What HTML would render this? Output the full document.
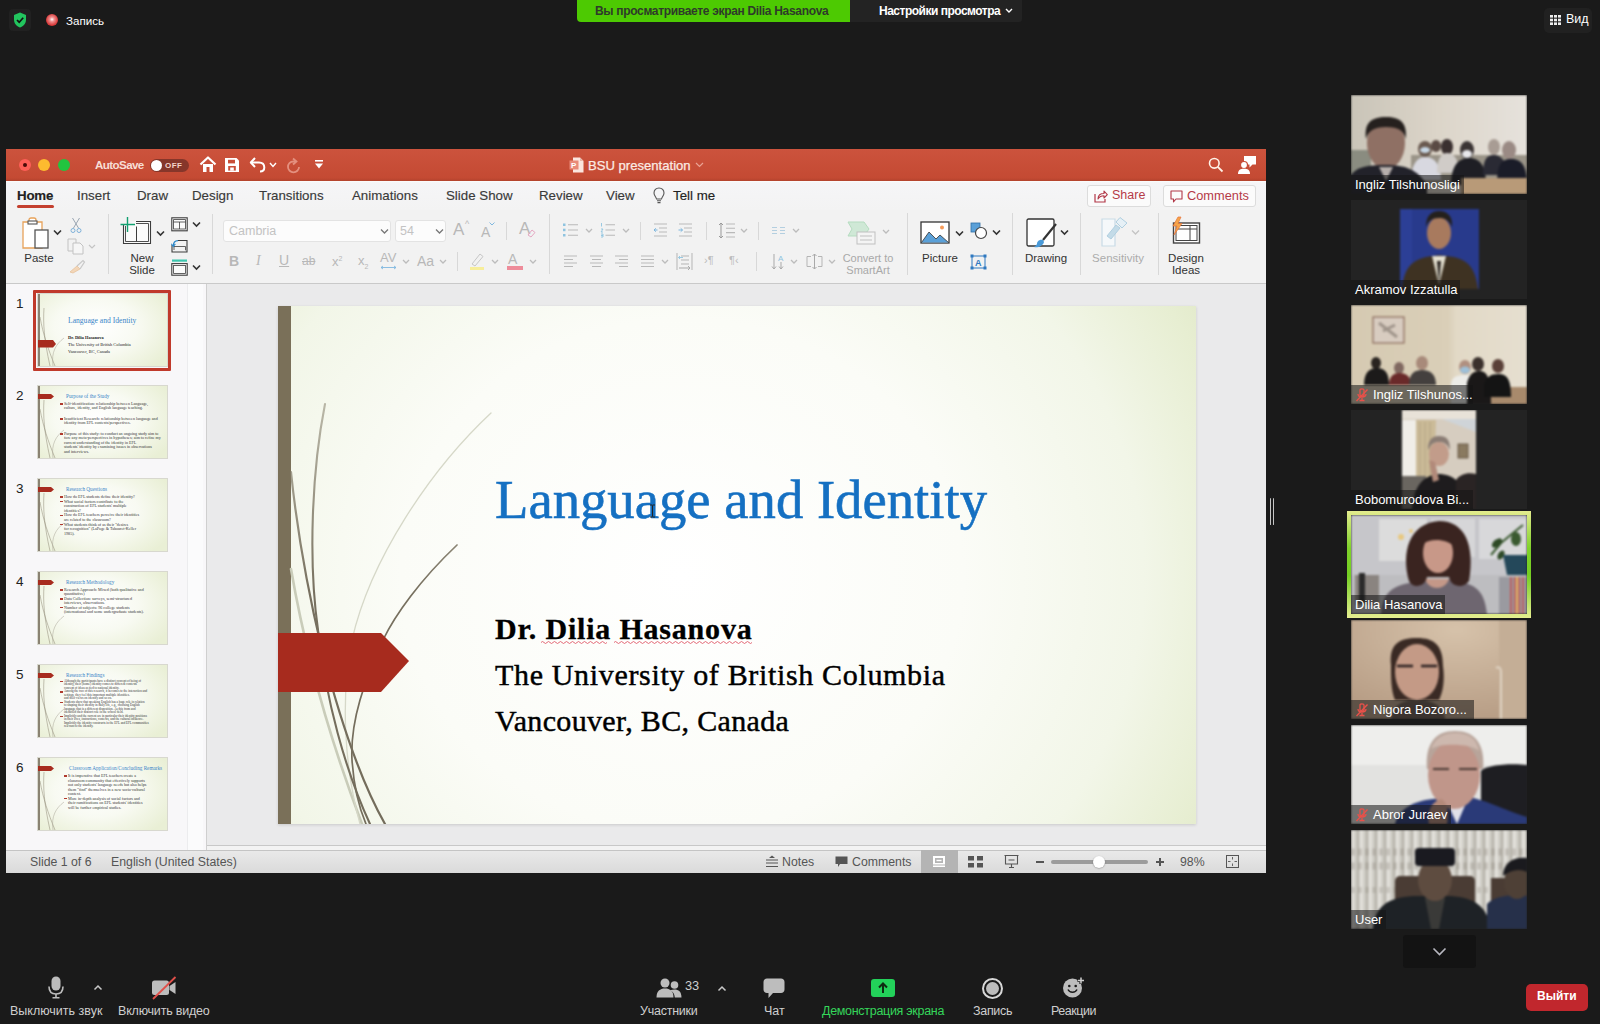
<!DOCTYPE html>
<html><head><meta charset="utf-8">
<style>
*{margin:0;padding:0;box-sizing:border-box}
html,body{width:1600px;height:1024px;overflow:hidden;background:#1a1a1a;font-family:"Liberation Sans",sans-serif}
.a{position:absolute}
.w{color:#fff}
/* top zoom bar */
#banner{left:577px;top:0;width:273px;height:22px;background:#4dca02;border-radius:0 0 0 4px}
#banner span{position:absolute;white-space:nowrap;left:18px;top:4px;font-size:12px;font-weight:bold;color:#2e3a2a;letter-spacing:-0.32px}
#settings{left:850px;top:0;width:172px;height:22px;background:#232323;border-radius:0 0 3px 0}
#settings span{position:absolute;white-space:nowrap;left:29px;top:4px;font-size:12px;font-weight:bold;color:#fff;letter-spacing:-0.5px}
/* ppt window */
#win{left:6px;top:149px;width:1260px;height:724px;background:#f3f3f3;overflow:hidden}
#title{left:0;top:0;width:1260px;height:32px;background:linear-gradient(#cc533d,#c44a33 90%,#b3432d)}
#tabs{left:0;top:32px;width:1260px;height:29px;background:linear-gradient(#fdfdfd,#f5f5f7 6%,#f3f3f3)}
#tools{left:0;top:61px;width:1260px;height:74px;background:#f2f2f2;border-bottom:1px solid #c9c9c9}
#panel{left:0;top:135px;width:201px;height:566px;background:#f8f7f9;border-right:1px solid #cfcfcf}
#stage{left:201px;top:135px;width:1059px;height:562px;background:#eaeaeb;border-bottom:1px solid #c8c8c8}
#status{left:0;top:701px;width:1260px;height:23px;background:linear-gradient(#e9e9e9,#dadada);border-top:1px solid #c4c4c4}
.tabt{position:absolute;top:188px;font-size:13.3px;color:#3a3a3a;white-space:nowrap;-webkit-text-stroke:0.15px currentColor}
.rl{position:absolute;font-size:11px;color:#333;text-align:center;line-height:12px}
.dis{color:#a8a8a8}
.sep{position:absolute;width:1px;background:#d8d8d8}
/* slide */
#slide{left:272px;top:157px;width:918px;height:518px;background:radial-gradient(ellipse 68% 110% at 44% 52%,#ffffff 0%,#fbfcf7 45%,#f2f6e8 74%,#e7eed2 91%,#e0e8c6 100%);box-shadow:0 1px 3px rgba(0,0,0,.14)}
.th{position:absolute;left:38px;width:129px;height:72px;background:radial-gradient(ellipse 65% 75% at 45% 45%,#ffffff 0%,#f8faf2 50%,#e9efd5 100%);box-shadow:0 0 0 1px #d8d8cf;overflow:hidden}
.tt{white-space:nowrap;font-family:"Liberation Serif",serif}
/* participants */
.tile{position:absolute;left:1351px;width:176px;height:99px;background:#232323;overflow:hidden}
.tile svg{filter:blur(1.1px)}
.tile svg.a:not([width="79"]):not([width="74"]){filter:none}
.nm{position:absolute;left:0;bottom:0;height:19px;background:rgba(20,20,20,.55);color:#fff;font-size:13px;line-height:19px;padding:0 4px;white-space:nowrap}
/* bottom bar */
.bl{position:absolute;top:1004px;font-size:12.5px;color:#cfcfcf;white-space:nowrap}
</style></head><body>

<!-- top left -->
<div class="a" style="left:9px;top:9px;width:22px;height:22px;background:#212121;border-radius:4px"></div>
<svg class="a" style="left:13px;top:12px" width="14" height="16" viewBox="0 0 14 16"><path d="M7 0.5 L13 3 V7.5 C13 11.5 10.5 14.3 7 15.5 C3.5 14.3 1 11.5 1 7.5 V3 Z" fill="#22c55e"/><path d="M4 8 L6.2 10.2 L10.2 5.8" stroke="#111" stroke-width="1.7" fill="none"/></svg>
<div class="a" style="left:46px;top:14px;width:12px;height:12px;border-radius:50%;background:radial-gradient(circle at 50% 45%,#fff 0%,#f09090 25%,#d83a3a 65%,#a82020 100%)"></div>
<div class="a w" style="left:66px;top:14px;font-size:11.6px">Запись</div>

<div id="banner" class="a"><span>Вы просматриваете экран Dilia Hasanova</span></div>
<div id="settings" class="a"><span>Настройки просмотра</span></div>
<svg class="a" style="left:1005px;top:8px" width="8" height="6" viewBox="0 0 8 6"><path d="M1 1 L4 4 L7 1" stroke="#fff" stroke-width="1.4" fill="none"/></svg>

<div class="a" style="left:1544px;top:8px;width:48px;height:25px;background:#212121;border-radius:5px"></div>
<svg class="a" style="left:1550px;top:15px" width="11" height="10" viewBox="0 0 11 10"><g fill="#eee"><rect x="0" y="0" width="3" height="2.6"/><rect x="4" y="0" width="3" height="2.6"/><rect x="8" y="0" width="3" height="2.6"/><rect x="0" y="3.7" width="3" height="2.6"/><rect x="4" y="3.7" width="3" height="2.6"/><rect x="8" y="3.7" width="3" height="2.6"/><rect x="0" y="7.4" width="3" height="2.6"/><rect x="4" y="7.4" width="3" height="2.6"/><rect x="8" y="7.4" width="3" height="2.6"/></g></svg>
<div class="a w" style="left:1566px;top:12px;font-size:12.5px">Вид</div>

<!-- PowerPoint window -->
<div id="win" class="a">
  <div id="title" class="a"></div>
  <div id="tabs" class="a"></div>
  <div id="tools" class="a"></div>
  <div id="panel" class="a"></div>
  <div class="a" style="left:181px;top:135px;width:16px;height:566px;background:#fbfbfc;border-left:1px solid #ececee"></div>
  <div id="stage" class="a"></div>
  <div id="status" class="a"></div>
  <div id="slide" class="a">
    <div class="a" style="left:0;top:0;width:13px;height:518px;background:#7a7059"></div>
    <svg class="a" style="left:0;top:0" width="918" height="518" viewBox="278 306 918 518">
      <defs><linearGradient id="gd" gradientUnits="userSpaceOnUse" x1="0" y1="400" x2="0" y2="824"><stop offset="0" stop-color="#8a8470" stop-opacity="0.55"/><stop offset="0.45" stop-color="#77705f"/><stop offset="1" stop-color="#736c5b"/></linearGradient></defs>
      <g fill="none" stroke-linecap="round">
        <path d="M291 569 C305 650 330 740 362 824" stroke="#c9ccb9" stroke-width="2.6"/>
        <path d="M491 413 C430 470 370 560 352 640 C340 700 345 770 360 824" stroke="#d6d8c8" stroke-width="1.3"/>
        <path d="M325 404 C312 470 308 560 318 630 C326 700 345 770 370 824" stroke="url(#gd)" stroke-width="2.1"/>
        <path d="M291 472 C298 540 310 600 322 650 C340 720 360 780 385 824" stroke="url(#gd)" stroke-width="2.2"/>
        <path d="M457 545 C420 580 395 615 383 640 C365 680 350 720 352 760 C354 790 360 810 366 824" stroke="url(#gd)" stroke-width="1.7"/>
      </g>
      <path d="M278 633 H381 L409 661 L381 692 H278 Z" fill="#a72b1e"/>
    </svg>
    <div class="a" id="t1" style="left:217px;top:159px;font-family:'Liberation Serif',serif;font-size:54.7px;color:#1570c2;-webkit-text-stroke:0.6px #1570c2;white-space:nowrap;line-height:70px">Language and Identity</div>
    <div class="a" id="t2" style="left:217px;top:303px;font-family:'Liberation Serif',serif;font-size:30px;font-weight:bold;color:#000;-webkit-text-stroke:0.3px #000;white-space:nowrap;letter-spacing:0.8px;line-height:40px">Dr. Dilia Hasanova</div>
    <div class="a" id="t3" style="left:217px;top:349px;font-family:'Liberation Serif',serif;font-size:30px;letter-spacing:0.66px;color:#000;-webkit-text-stroke:0.45px #000;white-space:nowrap;line-height:40px">The University of British Columbia</div>
    <div class="a" id="t4" style="left:217px;top:395px;font-family:'Liberation Serif',serif;font-size:30px;letter-spacing:0.34px;color:#000;-webkit-text-stroke:0.45px #000;white-space:nowrap;line-height:40px">Vancouver, BC, Canada</div>
    <svg class="a" style="left:263px;top:334px" width="212" height="5" viewBox="0 0 212 5"><path d="M0 2.5 q1.5 -2 3 0 t3 0 t3 0 t3 0 t3 0 t3 0 t3 0 t3 0 t3 0 t3 0 t3 0 t3 0 t3 0 t3 0 t3 0 t3 0 t3 0 t3 0 t3 0 t3 0 t3 0 t3 0" stroke="#e05a6a" stroke-width="0.9" fill="none"/><path d="M73 2.5 q1.5 -2 3 0 t3 0 t3 0 t3 0 t3 0 t3 0 t3 0 t3 0 t3 0 t3 0 t3 0 t3 0 t3 0 t3 0 t3 0 t3 0 t3 0 t3 0 t3 0 t3 0 t3 0 t3 0 t3 0 t3 0 t3 0 t3 0 t3 0 t3 0 t3 0 t3 0 t3 0 t3 0 t3 0 t3 0 t3 0 t3 0 t3 0 t3 0 t3 0 t3 0 t3 0 t3 0 t3 0 t3 0 t3 0 t3 0" stroke="#e05a6a" stroke-width="0.9" fill="none"/></svg>
    <svg class="a" style="left:371px;top:198px" width="7" height="14" viewBox="0 0 7 14"><path d="M1 1 H3 Q3.5 1.5 4 1 H6 M3.5 1.5 V12.5 M1 13 H3 Q3.5 12.5 4 13 H6" stroke="#222" stroke-width="1" fill="none"/></svg>
  </div>
</div>


<!-- RIBBON (page coords) -->
<div id="rib">
<!-- traffic lights -->
<div class="a" style="left:19px;top:159px;width:12px;height:12px;border-radius:50%;background:#fd5f57"></div>
<div class="a" style="left:23px;top:163px;width:4px;height:4px;border-radius:50%;background:#4a0b08"></div>
<div class="a" style="left:38px;top:159px;width:12px;height:12px;border-radius:50%;background:#fdbb2f"></div>
<div class="a" style="left:58px;top:159px;width:12px;height:12px;border-radius:50%;background:#22c43f"></div>
<div class="a" style="left:95px;top:158px;font-size:11.6px;color:#f7ddd5;font-weight:bold;letter-spacing:-0.6px">AutoSave</div>
<div class="a" style="left:150px;top:159px;width:39px;height:13px;border-radius:7px;background:#86362a"></div>
<div class="a" style="left:151px;top:160px;width:11px;height:11px;border-radius:50%;background:#fff"></div>
<div class="a" style="left:165px;top:161px;font-size:8px;color:#f3d3ca;font-weight:bold;letter-spacing:0.5px">OFF</div>
<svg class="a" style="left:199px;top:156px" width="18" height="17" viewBox="0 0 18 17"><path d="M1.5 8.5 L9 1.5 L16.5 8.5" stroke="#fff" stroke-width="2.2" fill="none" stroke-linejoin="round"/><path d="M4 8 V16 H7.5 V11 H10.5 V16 H14 V8" stroke="none" fill="#fff"/></svg>
<svg class="a" style="left:224px;top:157px" width="16" height="16" viewBox="0 0 16 16"><path d="M1 1 H12.5 L15 3.5 V15 H1 Z" fill="#fff"/><rect x="4" y="2.8" width="7" height="3.6" fill="#c84e38"/><rect x="4.2" y="9" width="7.6" height="4.6" fill="#c84e38"/><rect x="6.2" y="10.5" width="3.6" height="3.2" fill="#fff"/></svg>
<svg class="a" style="left:249px;top:156px" width="17" height="17" viewBox="0 0 17 17"><path d="M6 2 L1.8 6.5 L6 11" stroke="#fff" stroke-width="2" fill="none" stroke-linejoin="round"/><path d="M2 6.5 H10 C13.5 6.5 15.3 8.8 15.3 11.5 C15.3 14 13.5 15.5 11 15.5" stroke="#fff" stroke-width="2" fill="none"/></svg>
<svg class="a" style="left:269px;top:162px" width="8" height="6" viewBox="0 0 8 6"><path d="M1 1 L4 4.5 L7 1" stroke="#fff" stroke-width="1.4" fill="none"/></svg>
<svg class="a" style="left:285px;top:156px" width="17" height="18" viewBox="0 0 17 18"><path d="M8 2.5 L11.5 5.5 L8 8.5" stroke="#e4907f" stroke-width="1.8" fill="none"/><path d="M11 5.5 H8.5 C5 5.5 3 8 3 11 C3 14 5.5 16.3 8.5 16.3 C11.5 16.3 14 14 14 11" stroke="#e4907f" stroke-width="1.8" fill="none"/></svg>
<svg class="a" style="left:314px;top:159px" width="10" height="11" viewBox="0 0 10 11"><rect x="1" y="1" width="8" height="1.6" fill="#fff"/><path d="M1 4.5 H9 L5 9.5 Z" fill="#fff"/></svg>
<svg class="a" style="left:569px;top:157px" width="15" height="16" viewBox="0 0 15 16"><path d="M4 0.5 H11 L14.5 4 V15.5 H4 Z" fill="#fbe6df"/><path d="M11 0.5 V4 H14.5" fill="#e8b7aa"/><rect x="0.5" y="3.5" width="9" height="9" fill="#e98a78"/><text x="2" y="11" font-size="8" font-family="Liberation Sans" font-weight="bold" fill="#fff">P</text></svg>
<div class="a" style="left:588px;top:158px;font-size:13.1px;color:#fbeae3;white-space:nowrap;-webkit-text-stroke:0.25px #fbeae3">BSU presentation</div>
<svg class="a" style="left:695px;top:162px" width="9" height="6" viewBox="0 0 9 6"><path d="M1 1 L4.5 4.5 L8 1" stroke="#eaa394" stroke-width="1.2" fill="none"/></svg>
<svg class="a" style="left:1208px;top:157px" width="16" height="16" viewBox="0 0 16 16"><circle cx="6.3" cy="6.3" r="4.8" stroke="#fff3e8" stroke-width="1.6" fill="none"/><path d="M9.8 9.8 L14.5 14.5" stroke="#fff3e8" stroke-width="1.8"/></svg>
<svg class="a" style="left:1237px;top:155px" width="20" height="20" viewBox="0 0 20 20"><path d="M7 1 H19 V9.5 H15.5 L12.5 12.5 V9.5 H7 Z" fill="#fff"/><circle cx="7" cy="10" r="3.5" fill="#fff" stroke="#c84e38" stroke-width="1.2"/><path d="M1 19 C1 15 3.5 13.8 7 13.8 C10.5 13.8 13 15 13 19 Z" fill="#fff"/></svg>

<!-- tabs -->
<div class="tabt" style="left:17px;color:#222;font-weight:bold;letter-spacing:-0.2px">Home</div>
<div class="a" style="left:17px;top:205px;width:37px;height:3px;border-radius:2px;background:#c4402f"></div>
<div class="tabt" style="left:77px">Insert</div>
<div class="tabt" style="left:137px">Draw</div>
<div class="tabt" style="left:192px">Design</div>
<div class="tabt" style="left:259px">Transitions</div>
<div class="tabt" style="left:352px">Animations</div>
<div class="tabt" style="left:446px">Slide Show</div>
<div class="tabt" style="left:539px">Review</div>
<div class="tabt" style="left:606px">View</div>
<svg class="a" style="left:653px;top:187px" width="12" height="17" viewBox="0 0 12 17"><path d="M6 1 C3 1 1 3.2 1 6 C1 8.5 3 9.8 3.5 12 H8.5 C9 9.8 11 8.5 11 6 C11 3.2 9 1 6 1 Z" stroke="#555" stroke-width="1.1" fill="none"/><path d="M4 13.8 H8 M4.5 15.6 H7.5" stroke="#555" stroke-width="1.1"/></svg>
<div class="tabt" style="left:673px;color:#222">Tell me</div>
<div class="a" style="left:1087px;top:185px;width:64px;height:22px;background:#fbfbfb;border:1px solid #dcdcdc;border-radius:3px"></div>
<svg class="a" style="left:1094px;top:189px" width="14" height="14" viewBox="0 0 14 14"><path d="M1 5 V13 H11 V10" stroke="#b23848" stroke-width="1.2" fill="none"/><path d="M4 10 C4 6 6.5 4.5 10 4.5 V2 L13.3 5.6 L10 9 V6.8 C7 6.8 5.3 7.8 4 10 Z" stroke="#b23848" stroke-width="1.1" fill="none" stroke-linejoin="round"/></svg>
<div class="a" style="left:1112px;top:188px;font-size:12.5px;color:#b53a47">Share</div>
<div class="a" style="left:1163px;top:185px;width:93px;height:22px;background:#fbfbfb;border:1px solid #dcdcdc;border-radius:3px"></div>
<svg class="a" style="left:1170px;top:190px" width="13" height="13" viewBox="0 0 13 13"><path d="M1 1 H12 V9 H6 L3.5 11.8 V9 H1 Z" stroke="#b23848" stroke-width="1.1" fill="none" stroke-linejoin="round"/></svg>
<div class="a" style="left:1187px;top:188px;font-size:12.8px;color:#b53a47">Comments</div>

<!-- tools -->
<svg class="a" style="left:21px;top:217px" width="30" height="33" viewBox="0 0 30 33"><path d="M2 5 H8 V3 C8 1.5 9 1 10 1 H13 C14 1 15 1.5 15 3 V5 H21 V31 H2 Z" fill="#fff" stroke="#e7a25a" stroke-width="1.3"/><rect x="7" y="4" width="9" height="3" fill="#fff" stroke="#555" stroke-width="1.1"/><rect x="14" y="13" width="13" height="18" fill="#fff" stroke="#555" stroke-width="1.3"/></svg>
<svg class="a" style="left:53px;top:229px" width="9" height="7" viewBox="0 0 9 7"><path d="M1 1.5 L4.5 5 L8 1.5" stroke="#333" stroke-width="1.6" fill="none"/></svg>
<div class="rl" style="left:22px;top:252px;width:34px;font-size:11.5px">Paste</div>
<svg class="a" style="left:70px;top:217px" width="12" height="17" viewBox="0 0 12 17"><path d="M2.5 1 L8.5 11 M9.5 1 L3.5 11" stroke="#9aa6b2" stroke-width="1"/><circle cx="3" cy="13.5" r="2" stroke="#7fb1d9" stroke-width="1" fill="none"/><circle cx="9" cy="13.5" r="2" stroke="#7fb1d9" stroke-width="1" fill="none"/></svg>
<svg class="a" style="left:67px;top:238px" width="19" height="17" viewBox="0 0 19 17"><path d="M1 1 H9 V13 H1 Z" fill="none" stroke="#c2c2c2" stroke-width="1"/><path d="M6 5 H13 L16 8 V16 H6 Z" fill="#f6f6f6" stroke="#c2c2c2" stroke-width="1"/></svg>
<svg class="a" style="left:88px;top:244px" width="8" height="6" viewBox="0 0 8 6"><path d="M1 1 L4 4 L7 1" stroke="#c4c4c4" stroke-width="1.2" fill="none"/></svg>
<svg class="a" style="left:68px;top:259px" width="18" height="15" viewBox="0 0 18 15"><path d="M2 13 L9 7 L12 10 L5 14 Z" fill="#f3d6b8" stroke="#e6c19c" stroke-width="0.8"/><path d="M9 7 L15 1.5 L16.5 3 L12 10" stroke="#c8c8c8" stroke-width="1.2" fill="none"/></svg>
<div class="sep" style="left:108px;top:214px;height:60px"></div>
<svg class="a" style="left:120px;top:216px" width="33" height="30" viewBox="0 0 33 30"><path d="M3.5 8.5 V27.5 H30.5 V5.5 H16" fill="#fbfbfb" stroke="#3c3c3c" stroke-width="1.1"/><path d="M5.5 10 V25.5 H28.5 V7.5 H16" fill="none" stroke="#3c3c3c" stroke-width="0.9"/><path d="M16.5 10.5 V25.5" stroke="#3c3c3c" stroke-width="1"/><path d="M7.5 1 V16 M0.5 8.5 H15" stroke="#12a070" stroke-width="1.4"/></svg>
<svg class="a" style="left:156px;top:230px" width="9" height="7" viewBox="0 0 9 7"><path d="M1 1.5 L4.5 5 L8 1.5" stroke="#333" stroke-width="1.6" fill="none"/></svg>
<div class="rl" style="left:124px;top:252px;width:36px;font-size:11.5px;line-height:12px">New<br>Slide</div>
<svg class="a" style="left:171px;top:217px" width="17" height="15" viewBox="0 0 17 15"><rect x="0.8" y="0.8" width="15.4" height="13" fill="#fbfbfb" stroke="#3c3c3c" stroke-width="1.1"/><rect x="2.6" y="2.6" width="11.8" height="9.4" fill="none" stroke="#3c3c3c" stroke-width="0.8"/><path d="M2.6 5 H14.4 M8.5 5 V12" stroke="#3c3c3c" stroke-width="0.8"/></svg>
<svg class="a" style="left:192px;top:221px" width="9" height="7" viewBox="0 0 9 7"><path d="M1 1.5 L4.5 5 L8 1.5" stroke="#333" stroke-width="1.6" fill="none"/></svg>
<svg class="a" style="left:171px;top:238px" width="17" height="15" viewBox="0 0 17 15"><path d="M7 2.5 H16 V14 H1 V7" fill="none" stroke="#3c3c3c" stroke-width="1.1"/><path d="M3 12 V8.5 H14.5 V12.3" fill="none" stroke="#3c3c3c" stroke-width="0.8"/><path d="M2.3 8 C2.3 4.5 3.8 2.6 7 2.6" stroke="#2a86c8" stroke-width="1.2" fill="none"/><path d="M0.3 5.8 L2.3 8.5 L4.3 5.8" stroke="#2a86c8" stroke-width="1.1" fill="none"/></svg>
<svg class="a" style="left:171px;top:259px" width="17" height="17" viewBox="0 0 17 17"><rect x="1" y="0.5" width="15" height="2.2" fill="#3cc6ae"/><rect x="0.8" y="4.6" width="15.4" height="11.6" fill="#fbfbfb" stroke="#3c3c3c" stroke-width="1.1"/><rect x="2.6" y="6.4" width="11.8" height="8" fill="none" stroke="#3c3c3c" stroke-width="0.8"/></svg>
<svg class="a" style="left:192px;top:264px" width="9" height="7" viewBox="0 0 9 7"><path d="M1 1.5 L4.5 5 L8 1.5" stroke="#333" stroke-width="1.6" fill="none"/></svg>
<div class="sep" style="left:212px;top:214px;height:60px"></div>
<!-- font box -->
<div class="a" style="left:223px;top:220px;width:168px;height:22px;background:#fcfcfc;border:1px solid #e3e3e3;border-radius:3px"></div>
<div class="a" style="left:229px;top:224px;font-size:12.5px;color:#c3c3c3">Cambria</div>
<svg class="a" style="left:380px;top:228px" width="9" height="7" viewBox="0 0 9 7"><path d="M1 1.5 L4.5 5 L8 1.5" stroke="#777" stroke-width="1.3" fill="none"/></svg>
<div class="a" style="left:395px;top:220px;width:51px;height:22px;background:#fcfcfc;border:1px solid #e3e3e3;border-radius:3px"></div>
<div class="a" style="left:400px;top:224px;font-size:12.5px;color:#c3c3c3">54</div>
<svg class="a" style="left:435px;top:228px" width="9" height="7" viewBox="0 0 9 7"><path d="M1 1.5 L4.5 5 L8 1.5" stroke="#777" stroke-width="1.3" fill="none"/></svg>
<div class="a dis" style="left:453px;top:220px;font-size:17px;color:#b8b8b8">A</div>
<div class="a" style="left:465px;top:219px;font-size:9px;color:#b8b8b8">^</div>
<div class="a dis" style="left:481px;top:224px;font-size:14px;color:#b8b8b8">A</div>
<svg class="a" style="left:489px;top:222px" width="6" height="4" viewBox="0 0 6 4"><path d="M0.5 0.5 L3 3 L5.5 0.5" stroke="#80b8e0" stroke-width="1" fill="none"/></svg>
<div class="sep" style="left:506px;top:222px;height:18px"></div>
<div class="a" style="left:519px;top:219px;font-size:17px;color:#b8b8b8">A</div>
<svg class="a" style="left:526px;top:228px" width="10" height="10" viewBox="0 0 10 10"><path d="M2 7 L6 2 L9 4.5 L5 9 Z" fill="none" stroke="#e5a7c2" stroke-width="1"/></svg>
<div class="sep" style="left:549px;top:214px;height:60px"></div>
<!-- row 2 font -->
<div class="a" style="left:229px;top:253px;font-size:14px;font-weight:bold;color:#b8b8b8">B</div>
<div class="a" style="left:256px;top:253px;font-size:14px;font-style:italic;color:#b8b8b8;font-family:'Liberation Serif',serif">I</div>
<div class="a" style="left:279px;top:252px;font-size:14px;color:#b8b8b8;text-decoration:underline">U</div>
<div class="a" style="left:302px;top:254px;font-size:12px;color:#b8b8b8;text-decoration:line-through">ab</div>
<div class="a" style="left:332px;top:254px;font-size:13px;color:#b8b8b8">x<sup style="font-size:7px">2</sup></div>
<div class="a" style="left:358px;top:253px;font-size:13px;color:#b8b8b8">x<sub style="font-size:7px">2</sub></div>
<div class="a" style="left:380px;top:250px;font-size:13px;color:#b8b8b8">AV</div>
<svg class="a" style="left:380px;top:265px" width="17" height="5" viewBox="0 0 17 5"><path d="M1 2.5 H16 M1 2.5 L3 1 M1 2.5 L3 4 M16 2.5 L14 1 M16 2.5 L14 4" stroke="#80b8e0" stroke-width="0.9" fill="none"/></svg>
<svg class="a" style="left:402px;top:259px" width="8" height="6" viewBox="0 0 8 6"><path d="M1 1 L4 4 L7 1" stroke="#bcbcbc" stroke-width="1.3" fill="none"/></svg>
<div class="a" style="left:417px;top:253px;font-size:14px;color:#b8b8b8">Aa</div>
<svg class="a" style="left:439px;top:259px" width="8" height="6" viewBox="0 0 8 6"><path d="M1 1 L4 4 L7 1" stroke="#bcbcbc" stroke-width="1.3" fill="none"/></svg>
<div class="sep" style="left:457px;top:252px;height:19px"></div>
<svg class="a" style="left:469px;top:252px" width="16" height="18" viewBox="0 0 16 18"><path d="M3 12 L11 2 L14 4.5 L6 14 Z" fill="none" stroke="#c6c6c6" stroke-width="1"/><rect x="1" y="15" width="14" height="3" fill="#f7ee9a"/></svg>
<svg class="a" style="left:491px;top:259px" width="8" height="6" viewBox="0 0 8 6"><path d="M1 1 L4 4 L7 1" stroke="#bcbcbc" stroke-width="1.3" fill="none"/></svg>
<div class="a" style="left:508px;top:251px;font-size:14px;color:#b8b8b8">A</div>
<div class="a" style="left:507px;top:266px;width:16px;height:4px;background:#ee8c9a"></div>
<svg class="a" style="left:529px;top:259px" width="8" height="6" viewBox="0 0 8 6"><path d="M1 1 L4 4 L7 1" stroke="#bcbcbc" stroke-width="1.3" fill="none"/></svg>
<!-- paragraph -->
<svg class="a" style="left:562px;top:222px" width="17" height="16" viewBox="0 0 17 16"><rect x="1" y="1.5" width="2.5" height="2.5" fill="#8fc4e0"/><rect x="1" y="6.7" width="2.5" height="2.5" fill="#8fc4e0"/><rect x="1" y="12" width="2.5" height="2.5" fill="#8fc4e0"/><path d="M6 2.7 H16 M6 8 H16 M6 13.2 H16" stroke="#b9b9b9" stroke-width="1.1"/></svg>
<svg class="a" style="left:585px;top:228px" width="8" height="6" viewBox="0 0 8 6"><path d="M1 1 L4 4 L7 1" stroke="#bcbcbc" stroke-width="1.3" fill="none"/></svg>
<svg class="a" style="left:600px;top:222px" width="16" height="16" viewBox="0 0 16 16"><path d="M1.5 1 V4.5 M1 7 H3 L1 10 H3 M1 12 H3 V15 H1 M1 13.5 H3" stroke="#8fc4e0" stroke-width="0.9" fill="none"/><path d="M5.5 2.7 H15 M5.5 8 H15 M5.5 13.2 H15" stroke="#b9b9b9" stroke-width="1.1"/></svg>
<svg class="a" style="left:622px;top:228px" width="8" height="6" viewBox="0 0 8 6"><path d="M1 1 L4 4 L7 1" stroke="#bcbcbc" stroke-width="1.3" fill="none"/></svg>
<div class="sep" style="left:640px;top:222px;height:18px"></div>
<svg class="a" style="left:653px;top:223px" width="15" height="14" viewBox="0 0 15 14"><path d="M1 1 H14 M6 5 H14 M6 9 H14 M1 13 H14" stroke="#b9b9b9" stroke-width="1.1"/><path d="M4.5 7 H1 M1 7 L2.8 5.3 M1 7 L2.8 8.7" stroke="#7bb5dd" stroke-width="1"/></svg>
<svg class="a" style="left:678px;top:223px" width="15" height="14" viewBox="0 0 15 14"><path d="M1 1 H14 M6 5 H14 M6 9 H14 M1 13 H14" stroke="#b9b9b9" stroke-width="1.1"/><path d="M0.5 7 H4.5 M4.5 7 L2.7 5.3 M4.5 7 L2.7 8.7" stroke="#7bb5dd" stroke-width="1"/></svg>
<div class="sep" style="left:706px;top:222px;height:18px"></div>
<svg class="a" style="left:718px;top:222px" width="18" height="17" viewBox="0 0 18 17"><path d="M3 1 V16 M1 3 L3 1 L5 3 M1 14 L3 16 L5 14" stroke="#999" stroke-width="1" fill="none"/><path d="M8 2 H17 M8 6.3 H17 M8 10.6 H17 M8 15 H17" stroke="#b9b9b9" stroke-width="1.1"/></svg>
<svg class="a" style="left:740px;top:228px" width="8" height="6" viewBox="0 0 8 6"><path d="M1 1 L4 4 L7 1" stroke="#bcbcbc" stroke-width="1.3" fill="none"/></svg>
<div class="sep" style="left:758px;top:222px;height:18px"></div>
<svg class="a" style="left:771px;top:226px" width="15" height="9" viewBox="0 0 15 9"><path d="M1 1.5 H6 M1 4.5 H6 M1 7.5 H6 M9 1.5 H14 M9 4.5 H14 M9 7.5 H14" stroke="#b4cfe0" stroke-width="1"/></svg>
<svg class="a" style="left:792px;top:228px" width="8" height="6" viewBox="0 0 8 6"><path d="M1 1 L4 4 L7 1" stroke="#bcbcbc" stroke-width="1.3" fill="none"/></svg>
<svg class="a" style="left:847px;top:221px" width="30" height="24" viewBox="0 0 30 24"><path d="M1 1 H17 L22 8 L17 15 H1 L5 8 Z" fill="#cfe8d6" stroke="#b5dcc0" stroke-width="1"/><rect x="10" y="11" width="18" height="12" fill="#f4f4f4" stroke="#c0c0c0" stroke-width="1"/><path d="M13 15 H25 M13 19 H25" stroke="#c0c0c0" stroke-width="1"/></svg>
<svg class="a" style="left:882px;top:229px" width="8" height="6" viewBox="0 0 8 6"><path d="M1 1 L4 4 L7 1" stroke="#bcbcbc" stroke-width="1.3" fill="none"/></svg>
<div class="rl dis" style="left:836px;top:252px;width:64px;font-size:11px;color:#a9a9a9">Convert to<br>SmartArt</div>
<!-- row 2 paragraph -->
<svg class="a" style="left:563px;top:255px" width="15" height="13" viewBox="0 0 15 13"><path d="M1 1 H14 M1 4.5 H10 M1 8 H14 M1 11.5 H10" stroke="#b9b9b9" stroke-width="1.1"/></svg>
<svg class="a" style="left:589px;top:255px" width="15" height="13" viewBox="0 0 15 13"><path d="M1 1 H14 M3 4.5 H12 M1 8 H14 M3 11.5 H12" stroke="#b9b9b9" stroke-width="1.1"/></svg>
<svg class="a" style="left:614px;top:255px" width="15" height="13" viewBox="0 0 15 13"><path d="M1 1 H14 M5 4.5 H14 M1 8 H14 M5 11.5 H14" stroke="#b9b9b9" stroke-width="1.1"/></svg>
<svg class="a" style="left:640px;top:255px" width="15" height="13" viewBox="0 0 15 13"><path d="M1 1 H14 M1 4.5 H14 M1 8 H14 M1 11.5 H14" stroke="#b9b9b9" stroke-width="1.1"/></svg>
<svg class="a" style="left:661px;top:259px" width="8" height="6" viewBox="0 0 8 6"><path d="M1 1 L4 4 L7 1" stroke="#bcbcbc" stroke-width="1.3" fill="none"/></svg>
<svg class="a" style="left:676px;top:252px" width="17" height="19" viewBox="0 0 17 19"><path d="M1 1 V18 M16 1 V18" stroke="#b5b5b5" stroke-width="1"/><path d="M5 4 H13 M5 8 H13 M5 12 H13" stroke="#b5b5b5" stroke-width="1"/><path d="M3 16 H14 M12 14 L14 16 L12 18" stroke="#a9a9a9" stroke-width="1" fill="none"/><path d="M4 4 L2.5 5.5 L4 7 M2.5 5.5 H7" stroke="#8fc4e0" stroke-width="0.9" fill="none"/></svg>
<div class="a" style="left:704px;top:254px;font-size:11px;color:#bcbcbc">›¶</div>
<div class="a" style="left:729px;top:254px;font-size:11px;color:#bcbcbc">¶‹</div>
<div class="sep" style="left:756px;top:252px;height:19px"></div>
<svg class="a" style="left:771px;top:253px" width="14" height="17" viewBox="0 0 14 17"><path d="M3 1 V16 M1 13.5 L3 16 L5 13.5 M10 9 V16 M8 13.5 L10 16 L12 13.5" stroke="#a9a9a9" stroke-width="1" fill="none"/><text x="7" y="8" font-size="8" font-family="Liberation Sans" fill="#8fc4e0">A</text></svg>
<svg class="a" style="left:790px;top:259px" width="8" height="6" viewBox="0 0 8 6"><path d="M1 1 L4 4 L7 1" stroke="#bcbcbc" stroke-width="1.3" fill="none"/></svg>
<svg class="a" style="left:806px;top:253px" width="17" height="17" viewBox="0 0 17 17"><path d="M5 3.5 H1 V13.5 H5 M12 3.5 H16 V13.5 H12" stroke="#b5b5b5" stroke-width="1" fill="none"/><path d="M8.5 1 V16 M6.5 3 L8.5 1 L10.5 3 M6.5 14 L8.5 16 L10.5 14" stroke="#a9a9a9" stroke-width="1" fill="none"/></svg>
<svg class="a" style="left:828px;top:259px" width="8" height="6" viewBox="0 0 8 6"><path d="M1 1 L4 4 L7 1" stroke="#bcbcbc" stroke-width="1.3" fill="none"/></svg>
<div class="sep" style="left:907px;top:213px;height:62px"></div>
<!-- insert -->
<svg class="a" style="left:920px;top:221px" width="30" height="23" viewBox="0 0 30 23"><rect x="1" y="1" width="28" height="21" fill="#fff" stroke="#333" stroke-width="1.3"/><path d="M1.5 21.5 L9 11 L16 18 L20 14 L28.5 21.5 Z" fill="#5aa0d8"/><path d="M1.5 21.5 L9 11 L16 18 L20 14 L28.5 21.5" fill="none" stroke="#333" stroke-width="0.8"/><circle cx="22" cy="6.5" r="2" fill="#f59b5a"/></svg>
<svg class="a" style="left:955px;top:230px" width="9" height="7" viewBox="0 0 9 7"><path d="M1 1.5 L4.5 5 L8 1.5" stroke="#333" stroke-width="1.6" fill="none"/></svg>
<div class="rl" style="left:918px;top:252px;width:44px;font-size:11.5px">Picture</div>
<svg class="a" style="left:970px;top:222px" width="18" height="18" viewBox="0 0 18 18"><rect x="1" y="1" width="9" height="9" fill="#5aa0d8" stroke="#2f6fa8" stroke-width="0.8"/><circle cx="11" cy="11" r="5.5" fill="#fff" stroke="#444" stroke-width="1.2"/></svg>
<svg class="a" style="left:992px;top:229px" width="9" height="7" viewBox="0 0 9 7"><path d="M1 1.5 L4.5 5 L8 1.5" stroke="#333" stroke-width="1.6" fill="none"/></svg>
<svg class="a" style="left:970px;top:254px" width="17" height="16" viewBox="0 0 17 16"><rect x="2" y="2" width="13" height="12" fill="none" stroke="#2f79c0" stroke-width="1"/><rect x="0.5" y="0.5" width="3" height="3" fill="#2f79c0"/><rect x="13.5" y="0.5" width="3" height="3" fill="#2f79c0"/><rect x="0.5" y="12.5" width="3" height="3" fill="#2f79c0"/><rect x="13.5" y="12.5" width="3" height="3" fill="#2f79c0"/><text x="5" y="12" font-size="9" font-family="Liberation Sans" font-weight="bold" fill="#2f79c0">A</text></svg>
<div class="sep" style="left:1012px;top:213px;height:62px"></div>
<svg class="a" style="left:1026px;top:218px" width="32" height="32" viewBox="0 0 32 32"><rect x="1" y="1" width="27" height="27" rx="1.5" fill="#fff" stroke="#333" stroke-width="1.3"/><path d="M30 6 L17 22" stroke="#333" stroke-width="2.2"/><path d="M17 22 C13 21 11 24 11 26 C10 28 8 29 8 29 C12 30 17 28 18 24 Z" fill="#4a9ad8"/></svg>
<svg class="a" style="left:1060px;top:229px" width="9" height="7" viewBox="0 0 9 7"><path d="M1 1.5 L4.5 5 L8 1.5" stroke="#333" stroke-width="1.6" fill="none"/></svg>
<div class="rl" style="left:1022px;top:252px;width:48px;font-size:11.5px">Drawing</div>
<div class="sep" style="left:1080px;top:213px;height:62px"></div>
<svg class="a" style="left:1101px;top:216px" width="28" height="32" viewBox="0 0 28 32"><path d="M1 3 H14 V30 H1 Z" fill="#f5f8fa" stroke="#c9dbe6" stroke-width="1.2"/><path d="M6 20 L15 9 L19 12 L10 23 Z" fill="#c3dbe8" stroke="#b0cfe0" stroke-width="1"/><path d="M15 6 L19 1.5 L26 7 L21 12 Z" fill="#e6f0f6" stroke="#b0cfe0" stroke-width="1"/></svg>
<svg class="a" style="left:1131px;top:229px" width="9" height="7" viewBox="0 0 9 7"><path d="M1 1.5 L4.5 5 L8 1.5" stroke="#c4c4c4" stroke-width="1.3" fill="none"/></svg>
<div class="rl" style="left:1090px;top:252px;width:56px;font-size:11.5px;color:#acacac">Sensitivity</div>
<div class="sep" style="left:1158px;top:213px;height:62px"></div>
<svg class="a" style="left:1170px;top:216px" width="31" height="29" viewBox="0 0 31 29"><rect x="3.5" y="7" width="26" height="20" fill="#fff" stroke="#444" stroke-width="1.4"/><rect x="6" y="9.5" width="21" height="15" fill="none" stroke="#444" stroke-width="1"/><path d="M20 9.5 V24.5 M6 13 H27" stroke="#444" stroke-width="1"/><path d="M8 1 L3 10 H7 L4 19 L12 7.5 H8 L11 1 Z" fill="#f5a54a" stroke="#e8743a" stroke-width="0.7"/></svg>
<div class="rl" style="left:1164px;top:252px;width:44px;font-size:11.5px">Design<br>Ideas</div>
</div>


<!-- thumbnails -->
<div class="a" style="left:33px;top:290px;width:138px;height:81px;border:3px solid #c0392b;border-radius:1px"></div>
<div class="a" style="left:16px;top:296px;font-size:13.5px;color:#222">1</div>
<div class="th" style="top:294px">
<div class="a" style="left:0;top:0;width:1.5px;height:100%;background:#8a8272"></div>
<svg class="a" style="left:0;top:0" width="130" height="72" viewBox="0 0 130 72"><g fill="none" stroke="#8a8470" stroke-width="0.5"><path d="M6 14 C5 30 6 45 12 72"/><path d="M2 23 C5 40 10 55 17 72"/><path d="M26 44 C18 50 13 58 15 72" stroke="#a8a496"/></g></svg>
<svg class="a" style="left:0;top:0" width="130" height="72"><path d="M0 46 H15 L18 50 L15 53.5 H0 Z" fill="#a72b1e"/></svg>
<div class="a tt" style="left:30px;top:22px;font-size:7.6px;color:#3a85c8">Language and Identity</div>
<div class="a tt" style="left:30px;top:40px;font-size:4.4px;font-weight:bold;color:#222;line-height:7px">Dr. Dilia Hasanova</div>
<div class="a tt" style="left:30px;top:47px;font-size:4.4px;color:#222;line-height:7px">The University of British Columbia<br>Vancouver, BC, Canada</div>
</div>
<div class="a" style="left:16px;top:388px;font-size:13.5px;color:#222">2</div>
<div class="th" style="top:386px">
<div class="a" style="left:0;top:0;width:1.5px;height:100%;background:#8a8272"></div>
<svg class="a" style="left:0;top:0" width="130" height="72" viewBox="0 0 130 72"><g fill="none" stroke="#8a8470" stroke-width="0.5"><path d="M6 14 C5 30 6 45 12 72"/><path d="M2 23 C5 40 10 55 17 72"/><path d="M26 44 C18 50 13 58 15 72" stroke="#a8a496"/></g></svg>
<svg class="a" style="left:0;top:0" width="130" height="72"><path d="M0 8 H13 L16 10.5 L13 13 H0 Z" fill="#a72b1e"/></svg>
<div class="a tt" style="left:28px;top:7px;font-size:5.2px;color:#3a85c8">Purpose of the Study</div>
<div class="a" style="left:22px;top:17.3px;width:3px;height:1.6px;background:#b03a2e"></div>
<div class="a tt" style="left:26px;top:16.0px;font-size:4.1px;color:#333;line-height:4.4px">Self-identification: relationship between Language,</div>
<div class="a tt" style="left:26px;top:20.4px;font-size:4.1px;color:#333;line-height:4.4px">culture, identity, and English language teaching.</div>
<div class="a" style="left:22px;top:32.3px;width:3px;height:1.6px;background:#b03a2e"></div>
<div class="a tt" style="left:26px;top:31.0px;font-size:4.1px;color:#333;line-height:4.4px">Insufficient Research: relationship between language and</div>
<div class="a tt" style="left:26px;top:35.4px;font-size:4.1px;color:#333;line-height:4.4px">identity from EFL contexts/perspectives.</div>
<div class="a" style="left:22px;top:47.2px;width:3px;height:1.6px;background:#b03a2e"></div>
<div class="a tt" style="left:26px;top:45.9px;font-size:4.1px;color:#333;line-height:4.4px">Purpose of this study: to conduct an ongoing study aim to</div>
<div class="a tt" style="left:26px;top:50.3px;font-size:4.1px;color:#333;line-height:4.4px">fore any meta-perspectives in hypotheses; aim to refine my</div>
<div class="a tt" style="left:26px;top:54.7px;font-size:4.1px;color:#333;line-height:4.4px">current understanding of the identity in EFL</div>
<div class="a tt" style="left:26px;top:59.1px;font-size:4.1px;color:#333;line-height:4.4px">students&#39; identity by examining issues in observations</div>
<div class="a tt" style="left:26px;top:63.5px;font-size:4.1px;color:#333;line-height:4.4px">and interviews.</div>
</div>
<div class="a" style="left:16px;top:481px;font-size:13.5px;color:#222">3</div>
<div class="th" style="top:479px">
<div class="a" style="left:0;top:0;width:1.5px;height:100%;background:#8a8272"></div>
<svg class="a" style="left:0;top:0" width="130" height="72" viewBox="0 0 130 72"><g fill="none" stroke="#8a8470" stroke-width="0.5"><path d="M6 14 C5 30 6 45 12 72"/><path d="M2 23 C5 40 10 55 17 72"/><path d="M26 44 C18 50 13 58 15 72" stroke="#a8a496"/></g></svg>
<svg class="a" style="left:0;top:0" width="130" height="72"><path d="M0 8 H13 L16 10.5 L13 13 H0 Z" fill="#a72b1e"/></svg>
<div class="a tt" style="left:28px;top:7px;font-size:5.2px;color:#3a85c8">Research Questions</div>
<div class="a" style="left:22px;top:17.3px;width:3px;height:1.6px;background:#b03a2e"></div>
<div class="a tt" style="left:26px;top:16.0px;font-size:4.1px;color:#333;line-height:4.6px">How do EFL students define their identity?</div>
<div class="a" style="left:22px;top:21.9px;width:3px;height:1.6px;background:#b03a2e"></div>
<div class="a tt" style="left:26px;top:20.6px;font-size:4.1px;color:#333;line-height:4.6px">What social factors contribute to the</div>
<div class="a tt" style="left:26px;top:25.2px;font-size:4.1px;color:#333;line-height:4.6px">construction of EFL students&#39; multiple</div>
<div class="a tt" style="left:26px;top:29.8px;font-size:4.1px;color:#333;line-height:4.6px">identities?</div>
<div class="a" style="left:22px;top:35.7px;width:3px;height:1.6px;background:#b03a2e"></div>
<div class="a tt" style="left:26px;top:34.4px;font-size:4.1px;color:#333;line-height:4.6px">How do EFL teachers perceive their identities</div>
<div class="a tt" style="left:26px;top:39.0px;font-size:4.1px;color:#333;line-height:4.6px">are related to the classroom?</div>
<div class="a" style="left:22px;top:44.9px;width:3px;height:1.6px;background:#b03a2e"></div>
<div class="a tt" style="left:26px;top:43.6px;font-size:4.1px;color:#333;line-height:4.6px">What students think of as their "desires</div>
<div class="a tt" style="left:26px;top:48.2px;font-size:4.1px;color:#333;line-height:4.6px">for recognition" (LaPage &amp; Tabouret-Keller</div>
<div class="a tt" style="left:26px;top:52.8px;font-size:4.1px;color:#333;line-height:4.6px">1985).</div>
</div>
<div class="a" style="left:16px;top:574px;font-size:13.5px;color:#222">4</div>
<div class="th" style="top:572px">
<div class="a" style="left:0;top:0;width:1.5px;height:100%;background:#8a8272"></div>
<svg class="a" style="left:0;top:0" width="130" height="72" viewBox="0 0 130 72"><g fill="none" stroke="#8a8470" stroke-width="0.5"><path d="M6 14 C5 30 6 45 12 72"/><path d="M2 23 C5 40 10 55 17 72"/><path d="M26 44 C18 50 13 58 15 72" stroke="#a8a496"/></g></svg>
<svg class="a" style="left:0;top:0" width="130" height="72"><path d="M0 8 H13 L16 10.5 L13 13 H0 Z" fill="#a72b1e"/></svg>
<div class="a tt" style="left:28px;top:7px;font-size:5.2px;color:#3a85c8">Research Methodology</div>
<div class="a" style="left:22px;top:17.3px;width:3px;height:1.6px;background:#b03a2e"></div>
<div class="a tt" style="left:26px;top:16.0px;font-size:4.1px;color:#333;line-height:4.4px">Research Approach: Mixed (both qualitative and</div>
<div class="a tt" style="left:26px;top:20.4px;font-size:4.1px;color:#333;line-height:4.4px">quantitative)</div>
<div class="a" style="left:22px;top:26.1px;width:3px;height:1.6px;background:#b03a2e"></div>
<div class="a tt" style="left:26px;top:24.8px;font-size:4.1px;color:#333;line-height:4.4px">Data Collection: surveys, semi-structured</div>
<div class="a tt" style="left:26px;top:29.2px;font-size:4.1px;color:#333;line-height:4.4px">interviews, observations.</div>
<div class="a" style="left:22px;top:34.9px;width:3px;height:1.6px;background:#b03a2e"></div>
<div class="a tt" style="left:26px;top:33.6px;font-size:4.1px;color:#333;line-height:4.4px">Number of subjects: 96 college students</div>
<div class="a tt" style="left:26px;top:38.0px;font-size:4.1px;color:#333;line-height:4.4px">(international and some undergraduate students).</div>
</div>
<div class="a" style="left:16px;top:667px;font-size:13.5px;color:#222">5</div>
<div class="th" style="top:665px">
<div class="a" style="left:0;top:0;width:1.5px;height:100%;background:#8a8272"></div>
<svg class="a" style="left:0;top:0" width="130" height="72" viewBox="0 0 130 72"><g fill="none" stroke="#8a8470" stroke-width="0.5"><path d="M6 14 C5 30 6 45 12 72"/><path d="M2 23 C5 40 10 55 17 72"/><path d="M26 44 C18 50 13 58 15 72" stroke="#a8a496"/></g></svg>
<svg class="a" style="left:0;top:0" width="130" height="72"><path d="M0 8 H13 L16 10.5 L13 13 H0 Z" fill="#a72b1e"/></svg>
<div class="a tt" style="left:28px;top:7px;font-size:5.2px;color:#3a85c8">Research Findings</div>
<div class="a" style="left:22px;top:15.8px;width:3px;height:1.6px;background:#b03a2e"></div>
<div class="a tt" style="left:26px;top:14.5px;font-size:3.2px;color:#333;line-height:3.5px">Although the participants have a distinct concept of being of</div>
<div class="a tt" style="left:26px;top:18.0px;font-size:3.2px;color:#333;line-height:3.5px">identity, their (home) identity comes to different contexts</div>
<div class="a tt" style="left:26px;top:21.5px;font-size:3.2px;color:#333;line-height:3.5px">concept of ideas as tied to national identity.</div>
<div class="a" style="left:22px;top:26.3px;width:3px;height:1.6px;background:#b03a2e"></div>
<div class="a tt" style="left:26px;top:25.0px;font-size:3.2px;color:#333;line-height:3.5px">Among the two of this research, it becomes to the interaction and</div>
<div class="a tt" style="left:26px;top:28.5px;font-size:3.2px;color:#333;line-height:3.5px">settings, they feel this important multiple identities.</div>
<div class="a tt" style="left:26px;top:32.0px;font-size:3.2px;color:#333;line-height:3.5px">and their views on identity and so on.</div>
<div class="a" style="left:22px;top:36.8px;width:3px;height:1.6px;background:#b03a2e"></div>
<div class="a tt" style="left:26px;top:35.5px;font-size:3.2px;color:#333;line-height:3.5px">Students show that speaking English has a huge role in relation</div>
<div class="a tt" style="left:26px;top:39.0px;font-size:3.2px;color:#333;line-height:3.5px">to shaping their identity in daily life, e.g., choosing English</div>
<div class="a tt" style="left:26px;top:42.5px;font-size:3.2px;color:#333;line-height:3.5px">language that is a different disposition. As this from and</div>
<div class="a tt" style="left:26px;top:46.0px;font-size:3.2px;color:#333;line-height:3.5px">identified their distinct role in the school field.</div>
<div class="a" style="left:22px;top:50.8px;width:3px;height:1.6px;background:#b03a2e"></div>
<div class="a tt" style="left:26px;top:49.5px;font-size:3.2px;color:#333;line-height:3.5px">Implicitly and the current are in particular their identity positions</div>
<div class="a tt" style="left:26px;top:53.0px;font-size:3.2px;color:#333;line-height:3.5px">in their lives, instructions, contexts, and the cultural influence.</div>
<div class="a tt" style="left:26px;top:56.5px;font-size:3.2px;color:#333;line-height:3.5px">Implicitly the identity constructs in the EFL and EFL communities</div>
<div class="a tt" style="left:26px;top:60.0px;font-size:3.2px;color:#333;line-height:3.5px">relevant to the identity.</div>
</div>
<div class="a" style="left:16px;top:760px;font-size:13.5px;color:#222">6</div>
<div class="th" style="top:758px">
<div class="a" style="left:0;top:0;width:1.5px;height:100%;background:#8a8272"></div>
<svg class="a" style="left:0;top:0" width="130" height="72" viewBox="0 0 130 72"><g fill="none" stroke="#8a8470" stroke-width="0.5"><path d="M6 14 C5 30 6 45 12 72"/><path d="M2 23 C5 40 10 55 17 72"/><path d="M26 44 C18 50 13 58 15 72" stroke="#a8a496"/></g></svg>
<svg class="a" style="left:0;top:0" width="130" height="72"><path d="M0 8 H13 L16 10.5 L13 13 H0 Z" fill="#a72b1e"/></svg>
<div class="a tt" style="left:31px;top:7px;font-size:5.2px;color:#3a85c8">Classroom Application/Concluding Remarks</div>
<div class="a" style="left:26px;top:17.3px;width:3px;height:1.6px;background:#b03a2e"></div>
<div class="a tt" style="left:30px;top:16.0px;font-size:4.1px;color:#333;line-height:4.5px">It is imperative that EFL teachers create a</div>
<div class="a tt" style="left:30px;top:20.5px;font-size:4.1px;color:#333;line-height:4.5px">classroom community that effectively supports</div>
<div class="a tt" style="left:30px;top:25.0px;font-size:4.1px;color:#333;line-height:4.5px">not only students&#39; language needs but also helps</div>
<div class="a tt" style="left:30px;top:29.5px;font-size:4.1px;color:#333;line-height:4.5px">them "find" themselves in a new socio-cultural</div>
<div class="a tt" style="left:30px;top:34.0px;font-size:4.1px;color:#333;line-height:4.5px">context.</div>
<div class="a" style="left:26px;top:39.8px;width:3px;height:1.6px;background:#b03a2e"></div>
<div class="a tt" style="left:30px;top:38.5px;font-size:4.1px;color:#333;line-height:4.5px">More in-depth analysis of social factors and</div>
<div class="a tt" style="left:30px;top:43.0px;font-size:4.1px;color:#333;line-height:4.5px">their ramifications on EFL students&#39; identities</div>
<div class="a tt" style="left:30px;top:47.5px;font-size:4.1px;color:#333;line-height:4.5px">will be further empirical studies.</div>
</div>

<!-- status bar -->
<div class="a" style="left:30px;top:855px;font-size:12.3px;color:#555;white-space:nowrap">Slide 1 of 6</div>
<div class="a" style="left:111px;top:855px;font-size:12.3px;color:#555;white-space:nowrap">English (United States)</div>
<svg class="a" style="left:765px;top:855px" width="14" height="13" viewBox="0 0 14 13"><path d="M7 0.5 L10 3 H4 Z" fill="#555"/><path d="M1 5 H13 M1 8 H13 M1 11.5 H13" stroke="#555" stroke-width="1.1"/></svg>
<div class="a" style="left:782px;top:855px;font-size:12.3px;color:#555">Notes</div>
<svg class="a" style="left:835px;top:856px" width="13" height="12" viewBox="0 0 13 12"><path d="M0.5 0.5 H12.5 V8 H5 L3 11 V8 H0.5 Z" fill="#555"/></svg>
<div class="a" style="left:852px;top:855px;font-size:12.3px;color:#555">Comments</div>
<div class="a" style="left:921px;top:850px;width:37px;height:23px;background:#b4b4b4"></div>
<svg class="a" style="left:932px;top:855px" width="14" height="13" viewBox="0 0 14 13"><path d="M1 1 H13 V12 H1 Z" fill="#fff"/><rect x="3" y="3" width="8" height="5" fill="#b4b4b4"/><rect x="4.5" y="4.8" width="5" height="1.4" fill="#fff"/><rect x="1" y="9.5" width="12" height="1" fill="#b4b4b4"/></svg>
<svg class="a" style="left:968px;top:856px" width="15" height="12" viewBox="0 0 15 12"><rect x="0" y="0" width="6" height="4.5" fill="#555"/><rect x="9" y="0" width="6" height="4.5" fill="#555"/><rect x="0" y="7" width="6" height="4.5" fill="#555"/><rect x="9" y="7" width="6" height="4.5" fill="#555"/></svg>
<svg class="a" style="left:1004px;top:855px" width="15" height="13" viewBox="0 0 15 13"><path d="M0.5 0.5 H14.5 M1.5 1 V9 H13.5 V1" stroke="#555" stroke-width="1.1" fill="none"/><path d="M4.5 5 H10.5 M7.5 9 V12 M5 12.5 H10" stroke="#555" stroke-width="1.1"/></svg>
<div class="a" style="left:1036px;top:861px;width:8px;height:2px;background:#555"></div>
<div class="a" style="left:1051px;top:860px;width:97px;height:4px;border-radius:2px;background:#9c9c9c"></div>
<div class="a" style="left:1093px;top:856px;width:12px;height:12px;border-radius:50%;background:#fff;box-shadow:0 0.5px 1.5px rgba(0,0,0,.35)"></div>
<div class="a" style="left:1156px;top:861px;width:8px;height:2px;background:#555"></div>
<div class="a" style="left:1159px;top:858px;width:2px;height:8px;background:#555"></div>
<div class="a" style="left:1180px;top:855px;font-size:12.3px;color:#555">98%</div>
<svg class="a" style="left:1226px;top:855px" width="13" height="13" viewBox="0 0 13 13"><rect x="0.5" y="0.5" width="12" height="12" fill="none" stroke="#555" stroke-width="1"/><path d="M6.5 2 V4.5 M6.5 8.5 V11 M2 6.5 H4.5 M8.5 6.5 H11" stroke="#555" stroke-width="0.9"/></svg>
<div class="a" style="left:1270px;top:498px;width:1.4px;height:27px;border-radius:1px;background:#c4c4c4"></div>
<div class="a" style="left:1273px;top:498px;width:1.4px;height:27px;border-radius:1px;background:#c4c4c4"></div>

<!-- participants -->
<div class="a" style="left:1347px;top:511px;width:184px;height:107px;background:linear-gradient(#e4ec8e,#7fd12a 35%,#74cf22 60%,#e6ee90)"></div>
<!-- tile 1 -->
<div class="tile" style="top:95px"><svg width="176" height="99" viewBox="0 0 176 99">
<defs><linearGradient id="w1" x1="0" x2="1"><stop offset="0" stop-color="#c9c4b8"/><stop offset="0.5" stop-color="#dcd5c9"/><stop offset="1" stop-color="#e6e2dc"/></linearGradient></defs>
<rect width="176" height="99" fill="url(#w1)"/>
<rect x="0" y="55" width="20" height="30" fill="#8a8c80"/>
<rect x="60" y="60" width="116" height="30" fill="#9a9488"/>
<ellipse cx="74" cy="54" rx="7" ry="8" fill="#6a5a50"/><path d="M60 85 C60 70 66 62 74 62 C84 62 90 70 90 85 Z" fill="#d8d8e0"/><ellipse cx="74" cy="55" rx="5" ry="3" fill="#c8d8e6"/>
<ellipse cx="85" cy="51" rx="5" ry="6" fill="#5a4a44"/>
<ellipse cx="96" cy="52" rx="6" ry="8" fill="#3a3030"/><path d="M86 78 C86 64 90 58 96 58 C104 58 108 66 108 78 Z" fill="#d0ccc8"/>
<ellipse cx="116" cy="55" rx="7" ry="9" fill="#3a3434"/><ellipse cx="116" cy="59" rx="5" ry="4" fill="#e8e8ec"/><path d="M100 90 C100 70 108 63 118 63 C130 63 135 72 135 90 Z" fill="#1e1e24"/>
<ellipse cx="143" cy="52" rx="6" ry="8" fill="#a89c94"/><path d="M132 80 C132 64 136 60 143 60 C150 60 156 66 156 80 Z" fill="#2a2a34"/>
<ellipse cx="158" cy="55" rx="7" ry="9" fill="#9a8a84"/><path d="M146 90 C146 70 150 64 160 64 C170 64 176 70 176 90 Z" fill="#1a1c28"/>
<rect x="110" y="83" width="66" height="16" fill="#b89a78"/>
<ellipse cx="35" cy="48" rx="19" ry="26" fill="#8f7064"/><path d="M15 44 C13 28 20 22 35 22 C50 22 56 28 55 44 C53 36 48 32 35 32 C23 32 17 36 15 44 Z" fill="#25201e"/>
<path d="M0 99 V80 C6 72 16 70 35 70 C54 70 66 74 76 90 V99 Z" fill="#22222a"/><path d="M28 72 L35 86 L42 72 Z" fill="#b8b0ac"/>
</svg><div class="nm">Ingliz Tilshunosligi</div></div>
<!-- tile 2 -->
<div class="tile" style="top:200px"><svg class="a" style="left:49px;top:9px" width="79" height="80" viewBox="0 0 79 80">
<rect width="79" height="80" fill="#283a8c"/><rect x="0" y="0" width="12" height="80" fill="#2c3f96"/>
<path d="M2 80 C4 58 12 52 26 48 L39 46 L54 48 C68 52 75 58 78 80 Z" fill="#3e3222"/>
<path d="M32 47 L39 76 L46 47 Z" fill="#e4e0d0"/><path d="M37 52 L39 76 L41 52 Z" fill="#2a2420"/>
<ellipse cx="39" cy="24" rx="12" ry="16" fill="#a87a5e"/><path d="M26 18 C26 7 31 2 39 2 C48 2 53 8 52 18 C49 11 45 9 39 9 C32 9 28 12 26 18 Z" fill="#24201c"/>
</svg><div class="nm" style="width:109px">Akramov Izzatulla</div></div>
<!-- tile 3 -->
<div class="tile" style="top:305px"><svg width="176" height="99" viewBox="0 0 176 99">
<defs><linearGradient id="w3" x1="0" x2="1"><stop offset="0" stop-color="#d6cab2"/><stop offset="0.55" stop-color="#dacfb8"/><stop offset="0.6" stop-color="#e2d9c6"/><stop offset="1" stop-color="#e6dfd0"/></linearGradient></defs>
<rect width="176" height="99" fill="url(#w3)"/>
<rect x="22" y="12" width="31" height="26" fill="#d8ccc0" stroke="#8a6a5a" stroke-width="1.2"/><path d="M28 18 L46 32 M32 26 L44 20" stroke="#6a6058" stroke-width="3" opacity=".5"/>
<rect x="130" y="82" width="46" height="17" fill="#a88a6c"/><rect x="120" y="86" width="40" height="6" fill="#d8c8b0"/>
<ellipse cx="25" cy="58" rx="5" ry="6" fill="#2a2420"/><path d="M13 80 C13 68 18 63 26 63 C34 63 38 68 38 80 Z" fill="#1c1a1a"/>
<ellipse cx="48" cy="63" rx="5" ry="6" fill="#806860"/><path d="M38 80 C38 72 42 68 48 68 C56 68 60 72 60 80 Z" fill="#6a2a2a"/>
<ellipse cx="71" cy="58" rx="6" ry="7" fill="#a88a7a"/><path d="M58 80 C58 68 64 65 71 65 C80 65 85 70 85 80 Z" fill="#44403e"/>
<ellipse cx="114" cy="62" rx="6" ry="7" fill="#b09080"/><ellipse cx="114" cy="65" rx="5" ry="3.5" fill="#9ec0d8"/><path d="M100 99 V80 C100 72 106 70 114 70 C124 70 128 74 128 99 Z" fill="#ecece8"/>
<ellipse cx="127" cy="59" rx="6" ry="7" fill="#3a302c"/><path d="M116 99 V78 C118 70 122 66 128 66 C136 66 140 72 140 99 Z" fill="#1a1818"/>
<ellipse cx="147" cy="61" rx="6" ry="7" fill="#5a4038"/><path d="M133 92 V80 C135 72 140 69 147 69 C156 69 160 74 160 92 Z" fill="#141414"/>
</svg><div class="nm" style="width:122px;padding-left:22px">Ingliz Tilshunos...</div><svg class="a" style="left:4px;top:83px" width="14" height="14" viewBox="0 0 14 14"><path d="M5 2 C5 0.5 9 0.5 9 2 V7 C9 8.5 5 8.5 5 7 Z M3 6 C3 10 11 10 11 6 M7 10 V12.5 M4.5 12.5 H9.5" stroke="#e8514a" stroke-width="1.3" fill="none"/><path d="M1.5 13 L12.5 1.5" stroke="#e8514a" stroke-width="1.4"/></svg></div>
<!-- tile 4 -->
<div class="tile" style="top:410px"><svg class="a" style="left:51px;top:0" width="74" height="99" viewBox="0 0 74 99">
<rect width="74" height="99" fill="#d6cdc0"/><rect x="0" y="0" width="74" height="9" fill="#e8e2d8"/><path d="M40 9 L74 22 V9 Z" fill="#cfd4d8"/>
<rect x="0" y="10" width="14" height="66" fill="#f0eee8"/><path d="M14 10 H34 L32 76 H14 Z" fill="#cbbb98"/><path d="M18 12 V74 M23 12 V74 M28 12 V74" stroke="#b4a482" stroke-width="1"/>
<rect x="56" y="34" width="10" height="14" fill="#8a7a60" stroke="#5a4a3a" stroke-width="0.8"/>
<rect x="0" y="66" width="24" height="33" fill="#6a6660"/>
<path d="M10 99 C12 74 22 66 36 64 C52 64 62 72 64 99 Z" fill="#1e1c1e"/>
<ellipse cx="37" cy="44" rx="10" ry="12" fill="#c29c8a"/><path d="M26 40 C26 30 30 26 37 26 C45 26 48 30 48 40 C45 33 41 32 37 32 C32 32 29 34 26 40 Z" fill="#8a7c74"/>
<path d="M27 50 L31 72 L37 70 L33 52 Z" fill="#b28a7a"/>
<path d="M54 99 V70 C58 64 66 62 74 64 V99 Z" fill="#2a2424"/>
</svg><div class="nm" style="width:122px">Bobomurodova Bi...</div></div>
<!-- tile 5 -->
<div class="tile" style="top:515px"><svg width="176" height="99" viewBox="0 0 176 99">
<rect width="176" height="99" fill="#bdbdc0"/><rect x="0" y="0" width="176" height="60" fill="#c6c6ca"/>
<rect x="28" y="4" width="48" height="42" fill="#dcdcdc"/><circle cx="50" cy="22" r="3" fill="#e8c880"/><circle cx="60" cy="16" r="2" fill="#e8c880"/>
<rect x="80" y="4" width="44" height="38" fill="#d6d6d8"/><rect x="128" y="4" width="48" height="40" fill="#d8d8da"/>
<path d="M140 40 L150 28 L162 18 L172 10" stroke="#3a5a30" stroke-width="2" fill="none"/><ellipse cx="146" cy="28" rx="6" ry="3.5" fill="#2e4a26" transform="rotate(-40 146 28)"/><ellipse cx="165" cy="24" rx="5" ry="7" fill="#3a5a30"/><ellipse cx="150" cy="40" rx="3" ry="5" fill="#2e4a26" transform="rotate(30 150 40)"/>
<path d="M152 40 H176 V60 H156 Z" fill="#24485a"/>
<rect x="148" y="62" width="28" height="37" fill="#9a9aa0"/><path d="M160 62 V99 M164 62 V99 M168 62 V99 M172 62 V99" stroke="#c84a4a" stroke-width="1.5"/><path d="M166 62 V99" stroke="#f0d060" stroke-width="1.5"/>
<rect x="4" y="60" width="24" height="30" fill="#8a8480"/><rect x="8" y="58" width="6" height="30" fill="#2a2a2a"/>
<path d="M30 99 C32 78 40 72 58 68 L74 64 H98 L114 68 C128 72 134 80 136 99 Z" fill="#6e6670"/>
<path d="M74 64 C78 76 94 76 98 64 Z" fill="#c49888"/>
<path d="M58 66 C50 38 58 8 88 6 C114 6 124 30 118 66 C112 74 100 72 98 62 L76 62 C74 72 62 74 58 66 Z" fill="#3a2420"/>
<ellipse cx="87" cy="38" rx="15" ry="20" fill="#c89888"/>
<path d="M70 30 C72 16 80 12 88 12 C98 12 106 18 104 32 C96 24 80 22 70 30 Z" fill="#3a2420"/>
</svg><div class="nm" style="width:94px">Dilia Hasanova</div></div>
<!-- tile 6 -->
<div class="tile" style="top:620px"><svg width="176" height="99" viewBox="0 0 176 99">
<defs><radialGradient id="w6" cx="0.6" cy="0.1" r="0.9"><stop offset="0" stop-color="#d6c2aa"/><stop offset="1" stop-color="#b89e86"/></radialGradient></defs>
<rect width="176" height="99" fill="url(#w6)"/><rect x="148" y="0" width="28" height="99" fill="#c4ae96"/>
<path d="M145 48 C148 46 150 48 150 52 V99" stroke="#e0d4c4" stroke-width="2" fill="none"/>
<path d="M40 45 C38 24 48 18 66 18 C84 18 92 26 92 46 C94 60 92 72 88 80 L44 80 C40 70 40 58 40 45 Z" fill="#3a2a24"/>
<ellipse cx="66" cy="52" rx="22" ry="28" fill="#c49a86"/>
<path d="M46 46 H62 M70 46 H86" stroke="#2a2020" stroke-width="2.5"/>
<path d="M40 99 C42 84 52 80 66 80 C80 80 92 84 94 99 Z" fill="#6a5a50"/>
</svg><div class="nm" style="width:123px;padding-left:22px">Nigora Bozoro...</div><svg class="a" style="left:4px;top:83px" width="14" height="14" viewBox="0 0 14 14"><path d="M5 2 C5 0.5 9 0.5 9 2 V7 C9 8.5 5 8.5 5 7 Z M3 6 C3 10 11 10 11 6 M7 10 V12.5 M4.5 12.5 H9.5" stroke="#e8514a" stroke-width="1.3" fill="none"/><path d="M1.5 13 L12.5 1.5" stroke="#e8514a" stroke-width="1.4"/></svg></div>
<!-- tile 7 -->
<div class="tile" style="top:725px"><svg width="176" height="99" viewBox="0 0 176 99">
<rect width="176" height="99" fill="#e2e2e0"/><rect x="0" y="0" width="176" height="40" fill="#eeeeec"/>
<path d="M130 46 C134 40 160 38 176 40 V99 H130 Z" fill="#1e1e22"/>
<path d="M44 99 C48 84 62 76 82 74 L118 72 C138 76 150 84 176 92 V99 Z" fill="#2a3a78"/>
<path d="M96 78 L106 99 L116 76 Z" fill="#e0e0e8"/>
<path d="M76 44 C74 22 82 6 104 6 C126 6 134 22 132 44 Z" fill="#b8a49a"/>
<ellipse cx="103" cy="50" rx="26" ry="34" fill="#c0968a"/>
<path d="M80 24 C84 12 94 8 104 8 C118 8 126 14 128 26 C120 18 88 18 80 24 Z" fill="#cdb8ae"/>
<path d="M82 44 H98 M108 44 H126" stroke="#4a3a34" stroke-width="2"/>
<path d="M78 99 C76 90 78 78 90 74 C96 76 98 86 96 99 Z" fill="#b48a7a"/>
</svg><div class="nm" style="width:100px;padding-left:22px">Abror Juraev</div><svg class="a" style="left:4px;top:83px" width="14" height="14" viewBox="0 0 14 14"><path d="M5 2 C5 0.5 9 0.5 9 2 V7 C9 8.5 5 8.5 5 7 Z M3 6 C3 10 11 10 11 6 M7 10 V12.5 M4.5 12.5 H9.5" stroke="#e8514a" stroke-width="1.3" fill="none"/><path d="M1.5 13 L12.5 1.5" stroke="#e8514a" stroke-width="1.4"/></svg></div>
<!-- tile 8 -->
<div class="tile" style="top:830px"><svg width="176" height="99" viewBox="0 0 176 99">
<defs><pattern id="cur" width="9" height="99" patternUnits="userSpaceOnUse"><rect width="9" height="99" fill="#cfcdc6"/><rect x="0" width="3" height="99" fill="#e2e0da"/><rect x="6" width="1.5" height="99" fill="#aeaaa0"/></pattern></defs>
<rect width="176" height="99" fill="url(#cur)"/>
<path d="M0 22 H176 M0 36 H176" stroke="#8a8478" stroke-width="7" opacity=".3" stroke-dasharray="4 3"/>
<path d="M0 60 H176" stroke="#8a8478" stroke-width="6" opacity=".25" stroke-dasharray="4 3"/>
<rect x="44" y="46" width="80" height="32" rx="5" fill="#4a3c34"/>
<rect x="140" y="48" width="36" height="30" fill="#4a3c34"/>
<path d="M22 99 C24 76 36 68 62 66 H100 C124 68 136 76 140 99 Z" fill="#1e2226"/>
<path d="M74 68 L80 99 L88 99 L94 68 Z" fill="#3a3a38"/>
<ellipse cx="84" cy="50" rx="17" ry="21" fill="#5e4c40"/>
<rect x="64" y="18" width="40" height="18" rx="4" fill="#1a1a20"/>
<path d="M136 99 V74 C144 66 160 64 176 66 V99 Z" fill="#26304a"/>
<ellipse cx="166" cy="52" rx="13" ry="17" fill="#4e4036"/><path d="M152 46 C152 32 164 26 176 28 V42 C168 38 160 40 152 46 Z" fill="#1a1a1e"/>
</svg><div class="nm" style="width:35px">User</div></div>
<!-- scroll down -->
<div class="a" style="left:1403px;top:935px;width:73px;height:33px;background:#131313;border-radius:3px"></div>
<svg class="a" style="left:1432px;top:947px" width="15" height="9" viewBox="0 0 15 9"><path d="M1.5 1.5 L7.5 7.5 L13.5 1.5" stroke="#b8b8c0" stroke-width="1.6" fill="none"/></svg>

<!-- bottom toolbar -->
<svg class="a" style="left:48px;top:976px" width="16" height="23" viewBox="0 0 16 23"><rect x="3.5" y="0.5" width="9" height="14" rx="4.5" fill="#bdbdbd"/><path d="M1 10.5 C1 15.5 4 18 8 18 C12 18 15 15.5 15 10.5" stroke="#bdbdbd" stroke-width="1.6" fill="none"/><path d="M8 18 V21.5 M4.5 21.8 H11.5" stroke="#bdbdbd" stroke-width="1.6"/></svg>
<svg class="a" style="left:93px;top:984px" width="10" height="7" viewBox="0 0 10 7"><path d="M1.5 5.5 L5 2 L8.5 5.5" stroke="#c8c8c8" stroke-width="1.5" fill="none"/></svg>
<div class="bl" style="left:10px">Выключить звук</div>
<svg class="a" style="left:151px;top:976px" width="26" height="24" viewBox="0 0 26 24"><rect x="1" y="4.5" width="17" height="14.5" rx="2.5" fill="#bdbdbd"/><path d="M18.5 10 L24.5 6 V18 L18.5 14 Z" fill="#bdbdbd"/><path d="M2 23 L24.5 1" stroke="#e0504a" stroke-width="1.8"/></svg>
<div class="bl" style="left:118px;letter-spacing:-0.2px">Включить видео</div>
<svg class="a" style="left:656px;top:978px" width="26" height="20" viewBox="0 0 26 20"><circle cx="9" cy="5" r="4.5" fill="#bdbdbd"/><path d="M0.5 19.5 C0.5 13 4 10.5 9 10.5 C14 10.5 17.5 13 17.5 19.5 Z" fill="#bdbdbd"/><circle cx="18.5" cy="7" r="3.8" fill="#bdbdbd"/><path d="M14 12.3 C15.5 11.8 17 11.5 18.5 11.5 C22.5 11.5 25.5 13.5 25.5 19.5 H18.8 C18.5 16 17 13.5 14 12.3 Z" fill="#bdbdbd"/></svg>
<div class="a" style="left:685px;top:978px;font-size:12.8px;color:#cfcfcf">33</div>
<svg class="a" style="left:717px;top:985px" width="10" height="7" viewBox="0 0 10 7"><path d="M1.5 5.5 L5 2 L8.5 5.5" stroke="#c8c8c8" stroke-width="1.5" fill="none"/></svg>
<div class="bl" style="left:640px;letter-spacing:-0.25px">Участники</div>
<svg class="a" style="left:763px;top:978px" width="22" height="21" viewBox="0 0 22 21"><path d="M4 0.5 H18 C20 0.5 21.5 2 21.5 4 V11.5 C21.5 13.5 20 15 18 15 H10 L5.5 20 V15 H4 C2 15 0.5 13.5 0.5 11.5 V4 C0.5 2 2 0.5 4 0.5 Z" fill="#bdbdbd"/></svg>
<div class="bl" style="left:764px">Чат</div>
<div class="a" style="left:871px;top:979px;width:24px;height:18px;border-radius:3px;background:#23d15a"></div>
<svg class="a" style="left:877px;top:981px" width="12" height="14" viewBox="0 0 12 14"><path d="M6 12 V3 M2 6.5 L6 2.5 L10 6.5" stroke="#0f2a12" stroke-width="2" fill="none"/></svg>
<div class="bl" style="left:822px;color:#35d65a;letter-spacing:-0.3px">Демонстрация экрана</div>
<div class="a" style="left:982px;top:978px;width:21px;height:21px;border-radius:50%;border:2px solid #d8d8d8;background:#1a1a1a"></div>
<div class="a" style="left:986px;top:982px;width:13px;height:13px;border-radius:50%;background:#bdbdbd"></div>
<div class="bl" style="left:973px;letter-spacing:-0.3px">Запись</div>
<svg class="a" style="left:1062px;top:976px" width="24" height="22" viewBox="0 0 24 22"><circle cx="10.5" cy="12" r="9.5" fill="#bdbdbd"/><circle cx="7.3" cy="10" r="1.3" fill="#1a1a1a"/><circle cx="13.7" cy="10" r="1.3" fill="#1a1a1a"/><path d="M6 13.5 C7.5 17 13.5 17 15 13.5" stroke="#1a1a1a" stroke-width="1.5" fill="none"/><path d="M19 1 V8 M15.5 4.5 H22.5" stroke="#1a1a1a" stroke-width="3.2"/><path d="M19 1.5 V7.5 M16 4.5 H22" stroke="#d0d0d0" stroke-width="1.5"/></svg>
<div class="bl" style="left:1051px;letter-spacing:-0.45px">Реакции</div>
<div class="a" style="left:1526px;top:984px;width:62px;height:27px;border-radius:5px;background:#c1272d"></div>
<div class="a" style="left:1537px;top:989px;font-size:12px;font-weight:bold;color:#fff">Выйти</div>

</body></html>
